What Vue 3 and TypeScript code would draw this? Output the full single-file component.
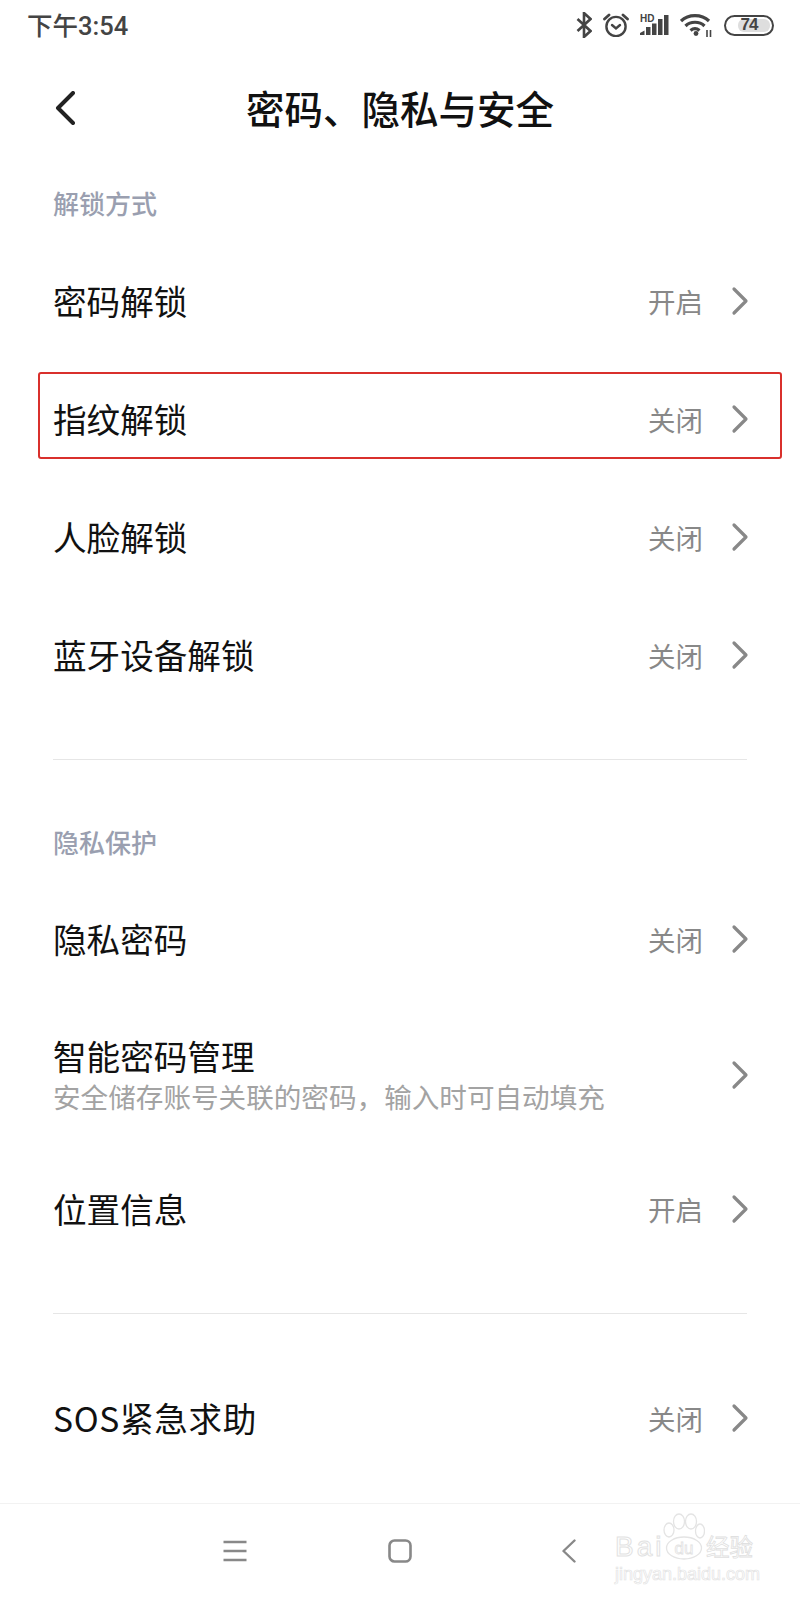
<template>
  <div class="page">
    <div class="status-bar">
      <span class="status-time">下午3:54</span>
      <div class="status-icons">
        <svg class="ic-bt" width="16" height="26" viewBox="0 0 16 26" fill="none" stroke="#444" stroke-width="2.6">
          <path d="M1.5 7l13 12L8 25V1l6.5 6-13 12" />
        </svg>
        <svg class="ic-alarm" width="26" height="24" viewBox="0 0 26 24" fill="none" stroke="#444" stroke-width="2.4" stroke-linecap="round">
          <circle cx="13" cy="13.5" r="9.6" />
          <path d="M9 12l4 3.5 4-3.5" />
          <path d="M1.5 6L6 2M24.5 6L20 2" stroke-width="2.8" />
        </svg>
        <svg class="ic-signal" width="32" height="24" viewBox="0 0 32 24" fill="#444">
          <text x="2" y="9" class="hd-text">HD</text>
          <path d="M2 22v-2l4.5-2.5V22z" />
          <rect x="8" y="14" width="4.5" height="8" />
          <rect x="14" y="10.5" width="4.5" height="11.5" />
          <rect x="20" y="6" width="4.5" height="16" />
          <rect x="26" y="2" width="4.5" height="20" />
        </svg>
        <svg class="ic-wifi" width="32" height="24" viewBox="0 0 32 24" fill="none" stroke="#444" stroke-width="3.2">
          <path d="M1 8C8.5 0.8 21.5 0.8 29 8M5.5 13C10.5 8 19.5 8 24.5 13M10.5 17.5c3-2.6 6-2.6 9 0" />
          <circle cx="16" cy="20.5" r="2.4" fill="#444" stroke="none" />
          <path d="M27 17v7M30.5 17v7" stroke-width="1.6" />
        </svg>
        <div class="battery">
          <div class="battery-fill"></div>
          <span class="battery-num">74</span>
        </div>
      </div>
    </div>

    <header class="nav-head">
      <svg class="head-back" width="20" height="34" viewBox="0 0 20 34" fill="none" stroke="#222" stroke-width="4" stroke-linecap="round" stroke-linejoin="round">
        <path d="M18 2L3 17l15 15" />
      </svg>
      <h1 class="head-title">密码、隐私与安全</h1>
    </header>

    <section class="group group-first">
      <div class="group-label">解锁方式</div>
      <div v-for="row in unlockRows" :key="row.title" class="row">
        <span class="row-title">{{ row.title }}</span>
        <span class="row-value">{{ row.value }}</span>
        <svg class="chevron" width="18" height="30" viewBox="0 0 18 30" fill="none" stroke="#888" stroke-width="3.2" stroke-linecap="round" stroke-linejoin="round">
          <path d="M3 3l12 12L3 27" />
        </svg>
        <div v-if="row.marked" class="red-box"></div>
      </div>
    </section>

    <div class="divider"></div>

    <section class="group group-second">
      <div class="group-label">隐私保护</div>
      <div v-for="row in privacyRows" :key="row.title" class="row" :class="{ tall: row.sub }">
        <div class="row-text">
          <span class="row-title">{{ row.title }}</span>
          <span v-if="row.sub" class="row-sub">{{ row.sub }}</span>
        </div>
        <span v-if="row.value" class="row-value">{{ row.value }}</span>
        <svg class="chevron" width="18" height="30" viewBox="0 0 18 30" fill="none" stroke="#888" stroke-width="3.2" stroke-linecap="round" stroke-linejoin="round">
          <path d="M3 3l12 12L3 27" />
        </svg>
      </div>
    </section>

    <div class="divider divider-second"></div>

    <section class="group group-third">
      <div class="row">
        <span class="row-title row-title-sos">SOS紧急求助</span>
        <span class="row-value">关闭</span>
        <svg class="chevron" width="18" height="30" viewBox="0 0 18 30" fill="none" stroke="#888" stroke-width="3.2" stroke-linecap="round" stroke-linejoin="round">
          <path d="M3 3l12 12L3 27" />
        </svg>
      </div>
    </section>

    <nav class="bottom-nav">
      <svg width="24" height="22" viewBox="0 0 24 22" fill="none" stroke="#888" stroke-width="2.4">
        <path d="M0.5 2h23M0.5 11h23M0.5 20h23" />
      </svg>
      <svg class="nav-home" width="24" height="24" viewBox="0 0 24 24" fill="none" stroke="#888" stroke-width="2.6">
        <rect x="1.5" y="1.5" width="21" height="21" rx="5" />
      </svg>
      <svg class="nav-back" width="14" height="24" viewBox="0 0 14 24" fill="none" stroke="#888" stroke-width="2.4" stroke-linecap="round" stroke-linejoin="round">
        <path d="M12.5 1.5L1.5 12l11 10.5" />
      </svg>
      <div class="watermark">
        <div class="wm-top">
          <span class="wm-bai">Bai</span>
          <svg class="wm-paw" width="42" height="47" viewBox="0 0 42 47" fill="none" stroke="#e4e4e4" stroke-width="1.3">
            <ellipse cx="6" cy="17" rx="5" ry="7" />
            <ellipse cx="16" cy="8.5" rx="5.5" ry="7.5" />
            <ellipse cx="28" cy="8.5" rx="5.5" ry="7.5" />
            <ellipse cx="37" cy="18" rx="4.5" ry="7" />
            <ellipse cx="21" cy="35" rx="17.5" ry="11" />
            <text x="21" y="41" class="wm-du">du</text>
          </svg>
          <span class="wm-jy">经验</span>
        </div>
        <div class="wm-url">jingyan.baidu.com</div>
      </div>
    </nav>
  </div>
</template>

<script setup lang="ts">
interface SettingRow {
  title: string
  value?: string
  sub?: string
  marked?: boolean
}

const unlockRows: SettingRow[] = [
  { title: "密码解锁", value: "开启" },
  { title: "指纹解锁", value: "关闭", marked: true },
  { title: "人脸解锁", value: "关闭" },
  { title: "蓝牙设备解锁", value: "关闭" },
]

const privacyRows: SettingRow[] = [
  { title: "隐私密码", value: "关闭" },
  { title: "智能密码管理", sub: "安全储存账号关联的密码，输入时可自动填充" },
  { title: "位置信息", value: "开启" },
]
</script>

<style>
html,
body {
  margin: 0;
  background: #fff;
}
</style>

<style scoped>
.page {
  position: relative;
  width: 800px;
  height: 1600px;
  overflow: hidden;
  background: #fff;
  font-family: "Noto Sans CJK SC", "Liberation Sans", sans-serif;
  color: #111;
  display: flex;
  flex-direction: column;
}

.status-bar {
  height: 50px;
  display: flex;
  align-items: center;
  justify-content: space-between;
  padding: 0 26px 0 27px;
  flex-shrink: 0;
}

.status-time {
  margin-bottom: 4px;
  font-family: Roboto, "Noto Sans CJK SC", sans-serif;
  font-size: 25.5px;
  font-weight: 500;
  color: #444;
}

.status-icons {
  display: flex;
  align-items: center;
}

.ic-alarm {
  margin-left: 11px;
}

.ic-signal {
  margin-left: 9px;
}

.ic-wifi {
  margin-left: 10px;
}

.hd-text {
  font-family: "Liberation Sans", sans-serif;
  font-size: 10px;
  font-weight: 700;
}

.battery {
  position: relative;
  width: 50px;
  height: 21px;
  margin-left: 12px;
  border: 2.5px solid #444;
  border-radius: 11px;
  box-sizing: border-box;
  display: flex;
  align-items: center;
  justify-content: center;
}

.battery-fill {
  position: absolute;
  right: 2px;
  top: 2px;
  bottom: 2px;
  width: 32px;
  border-radius: 6px;
  background: #dedede;
}

.battery-num {
  position: relative;
  font-family: "Liberation Sans", sans-serif;
  font-size: 17px;
  font-weight: 700;
  letter-spacing: -1px;
  color: #444;
}

.nav-head {
  position: relative;
  height: 120px;
  box-sizing: border-box;
  padding-bottom: 6px;
  display: flex;
  align-items: center;
  justify-content: center;
  flex-shrink: 0;
}

.head-back {
  position: absolute;
  left: 55px;
  top: 41px;
}

.head-title {
  margin: 0;
  font-size: 38.5px;
  font-weight: 500;
  line-height: 1;
  color: #111;
}

.group {
  padding: 0 51px 0 53px;
}

.group-first {
  margin-top: 15px;
}

.group-second {
  margin-top: 64px;
}

.group-third {
  margin-top: 46px;
}

.group-label {
  height: 40px;
  margin-bottom: 18px;
  font-size: 26px;
  line-height: 36px;
  font-weight: 500;
  color: #9a9fb0;
}

.group-second .group-label {
  margin-bottom: 17px;
}

.row {
  position: relative;
  height: 118px;
  box-sizing: border-box;
  padding-bottom: 2px;
  display: flex;
  align-items: center;
}

.row.tall {
  height: 152px;
  padding-bottom: 0;
}

.row-text {
  display: flex;
  flex-direction: column;
}

.row-title {
  font-size: 33.6px;
  line-height: 42px;
}

.row-title-sos {
  letter-spacing: 0.7px;
}

.row-sub {
  font-size: 27.6px;
  line-height: 38px;
  color: #a3a3a3;
}

.row-value {
  margin-left: auto;
  font-size: 27.5px;
  color: #888;
}

.row-value + .chevron {
  margin-left: 28px;
}

.row-text + .chevron {
  margin-left: auto;
}

.red-box {
  position: absolute;
  left: -15px;
  right: -33px;
  top: 11px;
  bottom: 20px;
  border: 2px solid #d9302c;
  border-radius: 3px;
}

.divider {
  height: 1px;
  margin: 44px 53px 0;
  background: #e6e6e6;
  flex-shrink: 0;
}

.divider-second {
  margin-top: 44px;
}

.bottom-nav {
  position: absolute;
  left: 0;
  right: 0;
  bottom: 0;
  height: 97px;
  box-sizing: border-box;
  border-top: 1px solid #f2f2f2;
  display: flex;
  align-items: center;
  padding: 0 0 2px 223px;
}

.nav-home {
  margin-left: 141px;
}

.nav-back {
  margin-left: 150px;
}

.watermark {
  position: absolute;
  left: 615px;
  top: 9px;
  width: 142px;
  font-family: "Liberation Sans", sans-serif;
}

.wm-top {
  display: flex;
  align-items: flex-end;
  height: 47px;
}

.wm-bai {
  width: 48px;
  font-size: 28px;
  line-height: 26px;
  letter-spacing: 3px;
  color: transparent;
  -webkit-text-stroke: 1px #e2e2e2;
}

.wm-paw {
  flex-shrink: 0;
}

.wm-du {
  font-size: 17px;
  text-anchor: middle;
  fill: none;
  stroke: #e2e2e2;
  stroke-width: 0.8;
}

.wm-jy {
  margin-left: 1px;
  font-family: "Noto Sans CJK SC", sans-serif;
  font-size: 23.5px;
  line-height: 28px;
  color: transparent;
  -webkit-text-stroke: 0.8px #e0e0e0;
}

.wm-url {
  margin-top: 3px;
  font-size: 18px;
  line-height: 22px;
  white-space: nowrap;
  color: transparent;
  -webkit-text-stroke: 0.7px #e4e4e4;
}
</style>
